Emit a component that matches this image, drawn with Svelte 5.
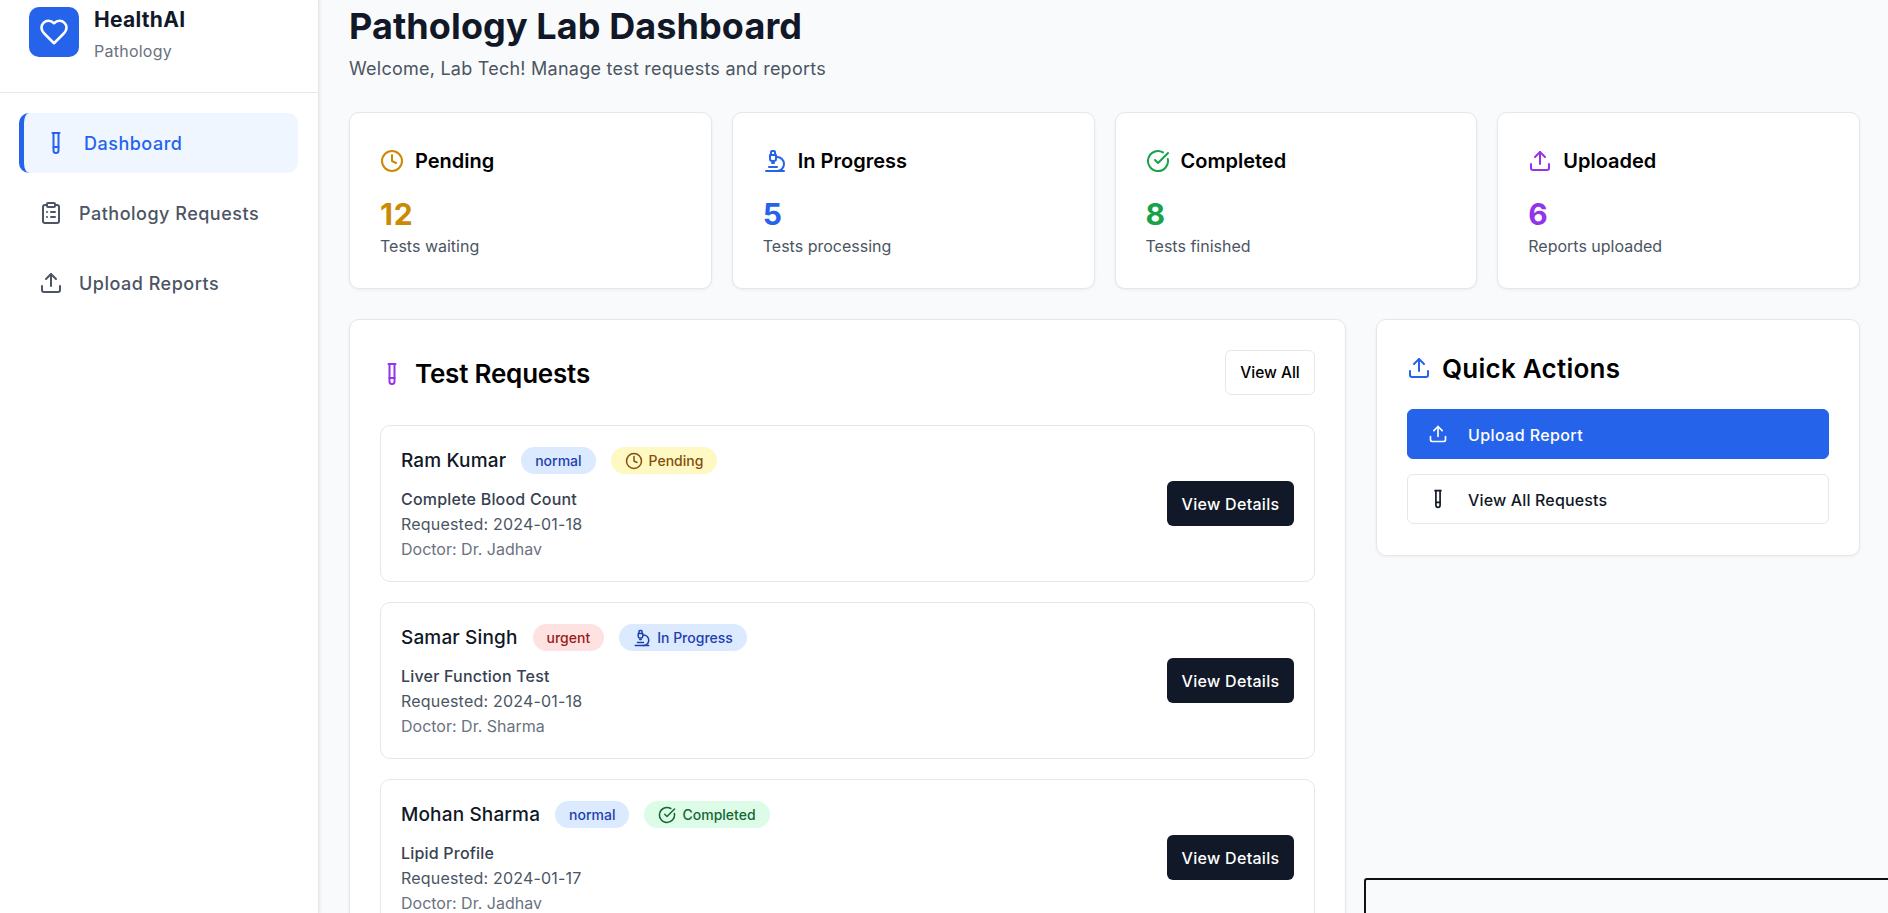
<script>
	const stats = [
		{ label: 'Pending', value: '12', note: 'Tests waiting', icon: 'clock', color: '#ca8a04' },
		{ label: 'In Progress', value: '5', note: 'Tests processing', icon: 'microscope', color: '#2563eb' },
		{ label: 'Completed', value: '8', note: 'Tests finished', icon: 'check', color: '#16a34a' },
		{ label: 'Uploaded', value: '6', note: 'Reports uploaded', icon: 'upload', color: '#9333ea' }
	];

	const requests = [
		{ name: 'Ram Kumar', priority: 'normal', status: 'Pending', icon: 'clock', kind: 'yellow', test: 'Complete Blood Count', date: '2024-01-18', doctor: 'Dr. Jadhav' },
		{ name: 'Samar Singh', priority: 'urgent', status: 'In Progress', icon: 'microscope', kind: 'blue', test: 'Liver Function Test', date: '2024-01-18', doctor: 'Dr. Sharma' },
		{ name: 'Mohan Sharma', priority: 'normal', status: 'Completed', icon: 'check', kind: 'green', test: 'Lipid Profile', date: '2024-01-17', doctor: 'Dr. Jadhav' }
	];
</script>

{#snippet icon(name, size, color)}
	<svg class="icon" width={size} height={size} viewBox="0 0 24 24" fill="none" stroke={color} stroke-width="2" stroke-linecap="round" stroke-linejoin="round">
		{#if name === 'clock'}
			<circle cx="12" cy="12" r="10" /><polyline points="12 6 12 12 16 14" />
		{:else if name === 'microscope'}
			<path d="M6 18h8" /><path d="M3 22h18" /><path d="M14 22a7 7 0 1 0 0-14h-1" /><path d="M9 14h2" /><path d="M9 12a2 2 0 0 1-2-2V6h6v4a2 2 0 0 1-2 2Z" /><path d="M12 6V3a1 1 0 0 0-1-1H9a1 1 0 0 0-1 1v3" />
		{:else if name === 'check'}
			<path d="M21.801 10A10 10 0 1 1 17 3.335" /><path d="m9 11 3 3L22 4" />
		{:else if name === 'upload'}
			<path d="M21 15v4a2 2 0 0 1-2 2H5a2 2 0 0 1-2-2v-4" /><polyline points="17 8 12 3 7 8" /><line x1="12" y1="3" x2="12" y2="15" />
		{:else if name === 'tube'}
			<path d="M14.5 2v17.5c0 1.4-1.1 2.5-2.5 2.5c-1.4 0-2.5-1.1-2.5-2.5V2" /><path d="M8.5 2h7" /><path d="M14.5 16h-5" />
		{:else if name === 'clipboard'}
			<rect x="8" y="2" width="8" height="4" rx="1" /><path d="M16 4h2a2 2 0 0 1 2 2v14a2 2 0 0 1-2 2H6a2 2 0 0 1-2-2V6a2 2 0 0 1 2-2h2" /><path d="M12 11h4" /><path d="M12 16h4" /><path d="M8 11h.01" /><path d="M8 16h.01" />
		{:else if name === 'heart'}
			<path d="M19 14c1.49-1.46 3-3.21 3-5.5A5.5 5.5 0 0 0 16.5 3c-1.76 0-3 .5-4.5 2-1.5-1.5-2.74-2-4.5-2A5.5 5.5 0 0 0 2 8.5c0 2.3 1.5 4.05 3 5.5l7 7Z" />
		{/if}
	</svg>
{/snippet}

<div class="app">
	<aside class="sidebar">
		<div class="brand">
			<div class="logo">{@render icon('heart', 30, '#fff')}</div>
			<div>
				<div class="brand-name">HealthAI</div>
				<div class="brand-sub">Pathology</div>
			</div>
		</div>
		<nav class="nav">
			<div class="nav-item active">{@render icon('tube', 24, '#2563eb')}<span>Dashboard</span></div>
			<div class="nav-item">{@render icon('clipboard', 24, '#4b5563')}<span>Pathology Requests</span></div>
			<div class="nav-item">{@render icon('upload', 24, '#4b5563')}<span>Upload Reports</span></div>
		</nav>
	</aside>

	<main class="main">
		<h1>Pathology Lab Dashboard</h1>
		<p class="welcome">Welcome, Lab Tech! Manage test requests and reports</p>

		<div class="stats">
			{#each stats as s}
				<div class="card stat">
					<div class="stat-head">{@render icon(s.icon, 24, s.color)}<span>{s.label}</span></div>
					<div class="stat-value" style="color: {s.color}">{s.value}</div>
					<div class="stat-note">{s.note}</div>
				</div>
			{/each}
		</div>

		<div class="columns">
			<section class="card panel">
				<div class="panel-head">
					<h2 class="requests-title">{@render icon('tube', 24, '#9333ea')}<span>Test Requests</span></h2>
					<button class="outline">View All</button>
				</div>
				<div class="list">
					{#each requests as r}
						<div class="request">
							<div class="request-info">
								<div class="request-top">
									<span class="name">{r.name}</span>
									<span class="badge {r.priority === 'urgent' ? 'red' : 'blue'}">{r.priority}</span>
									<span class="badge {r.kind}">{@render icon(r.icon, 18, 'currentColor')}{r.status}</span>
								</div>
								<div class="test">{r.test}</div>
								<div class="date">Requested: {r.date}</div>
								<div class="doctor">Doctor: {r.doctor}</div>
							</div>
							<button class="dark">View Details</button>
						</div>
					{/each}
				</div>
			</section>

			<section class="card actions">
				<h2 class="actions-title">{@render icon('upload', 24, '#2563eb')}<span>Quick Actions</span></h2>
				<button class="action primary">{@render icon('upload', 20, '#fff')}<span>Upload Report</span></button>
				<button class="action">{@render icon('tube', 20, '#111827')}<span>View All Requests</span></button>
			</section>
		</div>
	</main>

	<div class="overlay"></div>
</div>

<style>
	:global(body) {
		margin: 0;
		overflow: hidden;
	}

	.app {
		display: flex;
		height: 913px;
		overflow: hidden;
		position: relative;
		background: #f9fafb;
		font-family: Inter, "Noto Sans", sans-serif;
		color: #111827;
	}

	.icon {
		flex-shrink: 0;
		display: block;
	}

	.sidebar {
		width: 319px;
		flex-shrink: 0;
		background: #fff;
		border-right: 1px solid #e5e7eb;
		box-shadow: 1px 0 3px rgba(0, 0, 0, 0.08);
		box-sizing: border-box;
	}

	.brand {
		display: flex;
		gap: 15px;
		height: 93px;
		box-sizing: border-box;
		padding: 7px 29px 0;
		border-bottom: 1px solid #e5e7eb;
	}

	.logo {
		width: 50px;
		height: 50px;
		border-radius: 10px;
		background: #2563eb;
		display: flex;
		align-items: center;
		justify-content: center;
	}

	.brand-name {
		font-size: 21px;
		font-weight: 700;
		line-height: 26px;
		letter-spacing: 0.3px;
		color: #111827;
	}

	.brand-sub {
		font-size: 16px;
		line-height: 24px;
		margin-top: 6px;
		letter-spacing: 0.25px;
		color: #6b7280;
	}

	.nav {
		padding: 20px 20px 20px 19px;
		display: flex;
		flex-direction: column;
		gap: 10px;
	}

	.nav-item {
		display: flex;
		align-items: center;
		gap: 16px;
		height: 60px;
		padding: 0 20px;
		box-sizing: border-box;
		border-radius: 10px;
		font-size: 18px;
		font-weight: 500;
		letter-spacing: 0.5px;
		color: #4b5563;
	}

	.nav-item.active {
		background: #eff6ff;
		color: #2563eb;
		border-left: 5px solid #2563eb;
		padding-left: 20px;
	}

	.main {
		flex: 1;
		padding: 0 28px 0 30px;
		min-width: 0;
	}

	h1 {
		margin: 0;
		font-size: 36px;
		font-weight: 700;
		line-height: 52px;
		letter-spacing: 0.1px;
		color: #111827;
	}

	.welcome {
		margin: 3px 0 0;
		font-size: 18px;
		line-height: 27px;
		letter-spacing: 0.24px;
		color: #4b5563;
	}

	.card {
		background: #fff;
		border: 1px solid #e5e7eb;
		border-radius: 10px;
		box-shadow: 0 1px 3px rgba(0, 0, 0, 0.06);
		box-sizing: border-box;
	}

	.stats {
		display: grid;
		grid-template-columns: repeat(4, 1fr);
		gap: 20px;
		margin-top: 30px;
	}

	.stat {
		height: 177px;
		padding: 36px 30px 0;
	}

	.stat-head {
		display: flex;
		align-items: center;
		gap: 11px;
		font-size: 20px;
		font-weight: 600;
		line-height: 24px;
		color: #000;
	}

	.stat-value {
		font-size: 30px;
		font-weight: 700;
		line-height: 36px;
		letter-spacing: 0.8px;
		margin-top: 23px;
	}

	.stat-note {
		font-size: 16px;
		line-height: 24px;
		margin-top: 2px;
		color: #4b5563;
	}

	.columns {
		display: grid;
		grid-template-columns: 1fr 484px;
		gap: 30px;
		margin-top: 30px;
		align-items: start;
	}

	.panel {
		padding: 30px;
	}

	.panel-head {
		display: flex;
		justify-content: space-between;
		align-items: center;
		height: 45px;
	}

	h2 {
		margin: 0;
		display: flex;
		align-items: center;
		gap: 11px;
		font-size: 26px;
		font-weight: 600;
		color: #000;
	}

	.requests-title {
		margin-top: 2px;
		letter-spacing: -0.2px;
	}

	button {
		font-family: inherit;
		cursor: pointer;
		border-radius: 6px;
	}

	.outline {
		width: 90px;
		height: 45px;
		background: #fff;
		border: 1px solid #e5e7eb;
		font-size: 15.5px;
		font-weight: 500;
		color: #000;
	}

	.list {
		display: flex;
		flex-direction: column;
		gap: 20px;
		margin-top: 30px;
	}

	.request {
		display: flex;
		justify-content: space-between;
		align-items: center;
		height: 157px;
		padding: 0 20px;
		box-sizing: border-box;
		border: 1px solid #e5e7eb;
		border-radius: 10px;
	}

	.request-info {
		padding-top: 2px;
	}

	.request-top {
		display: flex;
		align-items: center;
		gap: 15px;
		margin-bottom: 13px;
	}

	.name {
		font-size: 19px;
		font-weight: 500;
		letter-spacing: 0.15px;
		color: #111827;
	}

	.badge {
		display: inline-flex;
		align-items: center;
		gap: 6px;
		height: 27px;
		padding: 0 14px;
		border-radius: 14px;
		font-size: 14px;
		font-weight: 500;
	}

	.blue { background: #dbeafe; color: #1e40af; }
	.red { background: #fee2e2; color: #991b1b; }
	.yellow { background: #fef9c3; color: #854d0e; }
	.green { background: #dcfce7; color: #166534; }

	.test {
		font-size: 16px;
		font-weight: 500;
		line-height: 25px;
		letter-spacing: 0.2px;
		color: #374151;
	}

	.date {
		font-size: 16px;
		line-height: 25px;
		letter-spacing: 0.2px;
		color: #4b5563;
	}

	.doctor {
		font-size: 16px;
		line-height: 25px;
		color: #6b7280;
	}

	.dark {
		width: 127px;
		height: 45px;
		background: #111827;
		border: none;
		color: #fff;
		font-size: 16px;
		font-weight: 500;
		letter-spacing: 0.3px;
	}

	.actions {
		padding: 30px;
		height: 237px;
	}

	.actions-title {
		height: 36px;
		margin-bottom: 23px;
		letter-spacing: 0.25px;
	}

	.action {
		display: flex;
		align-items: center;
		gap: 20px;
		width: 100%;
		height: 50px;
		padding: 0 20px;
		background: #fff;
		border: 1px solid #e5e7eb;
		font-size: 16px;
		font-weight: 500;
		letter-spacing: 0.15px;
		color: #111827;
		margin-top: 15px;
	}

	.action span {
		padding-top: 2px;
	}

	.action.primary {
		background: #2563eb;
		border-color: #2563eb;
		color: #fff;
		margin-top: 0;
		letter-spacing: 0.4px;
	}

	.overlay {
		position: absolute;
		left: 1364px;
		top: 878px;
		width: 600px;
		height: 100px;
		border: 2px solid #111;
		border-radius: 3px;
		box-sizing: border-box;
	}
</style>
